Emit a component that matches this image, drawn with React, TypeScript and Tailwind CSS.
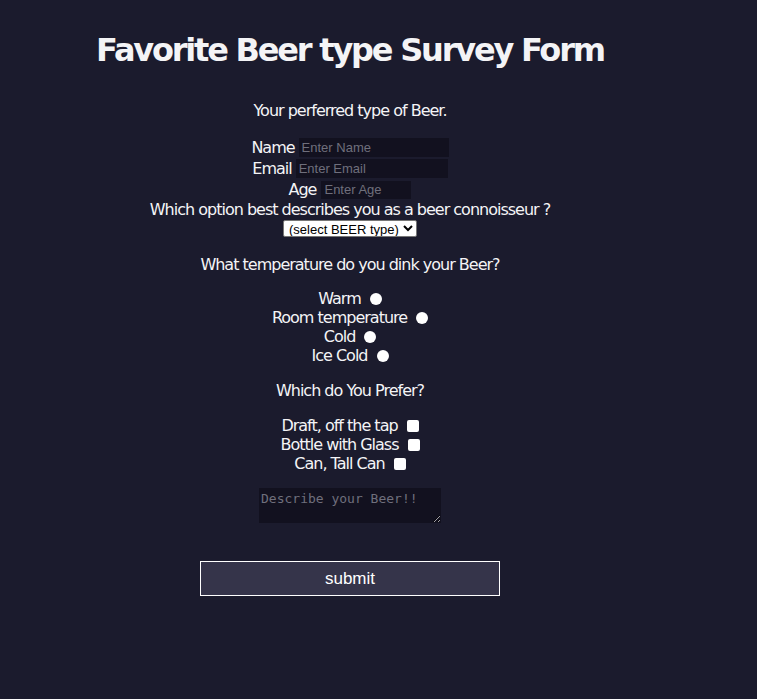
const font = { fontFamily: '"DejaVu Sans", Verdana, sans-serif' }

function Radio({ label }: { label: string }) {
    return (
        <label className="flex items-center h-[19px] leading-[19px]">
            <span>{label}</span>
            <span className="ml-[9px] w-[12px] h-[12px] rounded-full bg-white inline-block" />
        </label>
    )
}

function Check({ label }: { label: string }) {
    return (
        <label className="flex items-center h-[19px] leading-[19px]">
            <span>{label}</span>
            <span className="ml-[9px] w-[12px] h-[12px] rounded-[2px] bg-white inline-block" />
        </label>
    )
}

export default function App() {
    return (
        <div className="min-h-[699px] w-full bg-[#1b1b2d] text-[#f4f4f6]" style={font}>
            <div className="w-[700px] flex flex-col items-center text-[16px] tracking-[-1px]">
                <h1 className="mt-[30px] h-[40px] leading-[40px] text-[32px] font-bold tracking-[-2.2px]">Favorite Beer type Survey Form</h1>

                <p className="mt-[31px] leading-[20px]">Your perferred type of Beer.</p>

                <div className="mt-[16px] flex items-center h-[21px]">
                    <span>Name</span>
                    <input placeholder="Enter Name" className="ml-[4px] w-[150px] h-[19px] bg-[#12111f] px-[3px] text-[13px] tracking-normal placeholder:text-[#6f6f7c] outline-none" style={{ fontFamily: '"Liberation Sans", Arial, sans-serif' }} />
                </div>
                <div className="flex items-center h-[21px]">
                    <span>Email</span>
                    <input placeholder="Enter Email" className="ml-[4px] w-[152px] h-[19px] bg-[#12111f] px-[3px] text-[13px] tracking-normal placeholder:text-[#6f6f7c] outline-none" style={{ fontFamily: '"Liberation Sans", Arial, sans-serif' }} />
                </div>
                <div className="flex items-center h-[21px]">
                    <span>Age</span>
                    <input placeholder="Enter Age" className="ml-[5px] w-[90px] h-[18px] bg-[#12111f] px-[3px] text-[13px] tracking-normal placeholder:text-[#6f6f7c] outline-none" style={{ fontFamily: '"Liberation Sans", Arial, sans-serif' }} />
                </div>
                <p className="leading-[20px]">Which option best describes you as a beer connoisseur ?</p>
                <select className="w-[134px] h-[17px] bg-white text-black text-[13px] tracking-normal border border-[#767676] rounded-[2px] leading-[15px] px-[1px]" style={{ fontFamily: '"Liberation Sans", Arial, sans-serif' }}>
                    <option>(select BEER type)</option>
                </select>

                <p className="mt-[18px] leading-[20px]">What temperature do you dink your Beer?</p>

                <div className="mt-[14px] flex flex-col items-center">
                    <Radio label="Warm" />
                    <Radio label="Room temperature" />
                    <Radio label="Cold" />
                    <Radio label="Ice Cold" />
                </div>

                <p className="mt-[16px] leading-[20px]">Which do You Prefer?</p>

                <div className="mt-[15px] flex flex-col items-center">
                    <Check label="Draft, off the tap" />
                    <Check label="Bottle with Glass" />
                    <Check label="Can, Tall Can" />
                </div>

                <textarea placeholder="Describe your Beer!!" className="mt-[15px] w-[182px] h-[35px] bg-[#12111f] px-[2px] py-[1px] text-[13px] tracking-normal placeholder:text-[#6f6f7c] outline-none resize-y" style={{ fontFamily: '"DejaVu Sans Mono", "Liberation Mono", monospace' }} />

                <button className="mt-[38px] w-[300px] h-[35px] border border-white bg-[#35344a] text-[17px] tracking-normal text-white" style={{ fontFamily: '"Liberation Sans", Arial, sans-serif' }}>submit</button>
            </div>
        </div>
    )
}
